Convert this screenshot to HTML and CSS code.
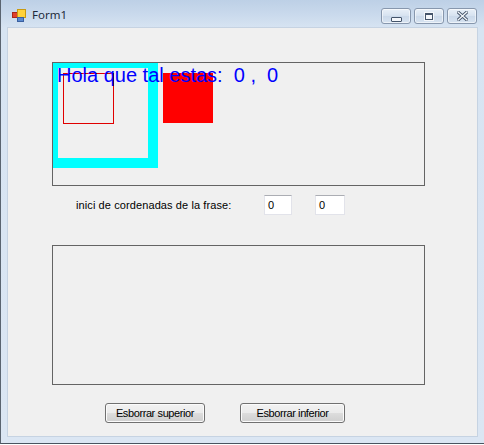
FILE: index.html
```html
<!DOCTYPE html>
<html>
<head>
<meta charset="utf-8">
<link rel="stylesheet" href="styles.css">
</head>
<body>
<div class="window">
  <div class="titlebar">
    <svg class="app-icon" width="14" height="13" viewBox="0 0 14 13">
      <rect x="0.5" y="3.5" width="5" height="5" fill="#e0402c" stroke="#a8261a"/>
      <rect x="5.5" y="0.5" width="8" height="8" fill="#ffd23c" stroke="#c99a10"/>
      <rect x="5.5" y="8.5" width="6" height="4" fill="#5a8ad0" stroke="#3a60a0"/>
    </svg>
    <span class="title">Form1</span>
    <div class="caption-buttons">
      <div class="cbtn"><span class="g-min"></span></div>
      <div class="cbtn"><span class="g-max"></span></div>
      <div class="cbtn">
        <svg width="11" height="10" viewBox="0 0 11 10"><path d="M1 1 L10 9 M10 1 L1 9" stroke="#44546a" stroke-width="3.2" stroke-linecap="square"/><path d="M1 1 L10 9 M10 1 L1 9" stroke="#f4f7fb" stroke-width="1.3" stroke-linecap="square"/></svg>
      </div>
    </div>
  </div>
  <div class="client">
    <div class="panel drawing">
      <div class="cyan-box"></div>
      <div class="red-outline"></div>
      <div class="red-fill"></div>
      <div class="hello">Hola que tal estas:&nbsp; 0 ,&nbsp; 0</div>
    </div>
    <div class="coords-row">
      <span class="coords-label">inici de cordenadas de la frase:</span>
      <div class="textbox tb1">0</div>
      <div class="textbox tb2">0</div>
    </div>
    <div class="panel lower"></div>
    <div class="buttons-row">
      <button class="btn b1">Esborrar superior</button>
      <button class="btn b2">Esborrar inferior</button>
    </div>
  </div>
</div>
</body>
</html>
```

FILE: styles.css
```css
html, body {
  margin: 0;
  padding: 0;
  width: 484px;
  height: 445px;
  overflow: hidden;
  background: #ffffff;
}
.window {
  width: 484px;
  height: 444px;
  box-sizing: border-box;
  border-left: 1px solid #5a6470;
  border-bottom: 1px solid #4a5460;
  margin-left: 0;
  background: linear-gradient(#bdd0e6 0px, #c9d9ec 14px, #d7e4f2 28px, #dbe6f3 100%);
  display: flex;
  flex-direction: column;
  font-family: "Liberation Sans", Arial, sans-serif;
}
.titlebar {
  height: 28px;
  display: flex;
  align-items: flex-start;
  position: relative;
}
.app-icon {
  margin-left: 11px;
  margin-top: 9px;
}
.title {
  margin-left: 6px;
  margin-top: 7px;
  font-family: "Noto Sans", "Open Sans", sans-serif;
  font-size: 11.5px;
  color: #1e2a3a;
  line-height: 16px;
}
.caption-buttons {
  margin-left: auto;
  margin-right: 7px;
  margin-top: 8px;
  display: flex;
  gap: 3px;
}
.cbtn {
  width: 30px;
  height: 16px;
  box-sizing: border-box;
  border: 1px solid #8797ad;
  border-radius: 3px;
  background: linear-gradient(#e9f0f8, #d6e2f0 50%, #cbd9ea 51%, #d7e3f1);
  box-shadow: inset 0 0 0 1px rgba(255,255,255,0.55);
  display: flex;
  align-items: center;
  justify-content: center;
}
.g-min {
  width: 9px;
  height: 3px;
  margin-top: 6px;
  border: 1px solid #44546a;
  border-radius: 1px;
  background: #f4f7fb;
}
.g-max {
  width: 6px;
  height: 4px;
  border: 1px solid #44546a;
  border-top-width: 2px;
  background: #f4f7fb;
  box-shadow: 0 0 0 1px #f4f7fb;
}
.client {
  margin-left: 7px;
  width: 469px;
  height: 408px;
  box-sizing: border-box;
  background: #f0f0f0;
  padding-left: 44px;
  padding-top: 34px;
  display: flex;
  flex-direction: column;
  align-items: flex-start;
  outline: 1px solid #c6d3e2;
}
.panel {
  box-sizing: border-box;
  border: 1px solid #646464;
  width: 373px;
  background: #f0f0f0;
}
.drawing {
  height: 124px;
  position: relative;
  overflow: hidden;
}
.cyan-box {
  position: absolute;
  left: 0;
  top: 0;
  width: 105px;
  height: 105px;
  box-sizing: border-box;
  border: solid #00ffff;
  border-width: 5px 10px 10px 5px;
}
.red-outline {
  position: absolute;
  left: 10px;
  top: 10px;
  width: 51px;
  height: 51px;
  box-sizing: border-box;
  border: 1px solid #e00000;
}
.red-fill {
  position: absolute;
  left: 110px;
  top: 10px;
  width: 50px;
  height: 50px;
  background: #ff0000;
}
.hello {
  position: absolute;
  left: 4px;
  top: 2px;
  font-family: "Liberation Sans", Arial, sans-serif;
  font-size: 20px;
  line-height: 20px;
  color: #0000ff;
  white-space: pre;
}
.coords-row {
  margin-top: 9px;
  height: 20px;
  display: flex;
  align-items: center;
  font-size: 11px;
  color: #000;
}
.coords-label {
  margin-left: 24px;
  width: 188px;
  white-space: nowrap;
  letter-spacing: 0.1px;
}
.textbox {
  height: 20px;
  box-sizing: border-box;
  border: 1px solid #e2e3ea;
  border-top-color: #abadb3;
  background: #fff;
  padding: 3px 0 0 3px;
  font-size: 11px;
  line-height: 13px;
}
.tb1 { width: 28px; }
.tb2 { width: 30px; margin-left: 23px; }
.lower {
  margin-top: 30px;
  height: 140px;
}
.buttons-row {
  margin-top: 18px;
  display: flex;
}
.btn {
  height: 20px;
  box-sizing: border-box;
  border: 1px solid #707070;
  border-radius: 3px;
  background: linear-gradient(#f2f2f2, #ebebeb 50%, #dddddd 51%, #cfcfcf);
  box-shadow: inset 0 0 0 1px #fbfbfb;
  font-family: "Liberation Sans", Arial, sans-serif;
  font-size: 11px;
  letter-spacing: -0.4px;
  color: #000;
  padding: 0;
  margin: 0;
}
.b1 { width: 100px; margin-left: 53px; }
.b2 { width: 105px; margin-left: 35px; }
```
